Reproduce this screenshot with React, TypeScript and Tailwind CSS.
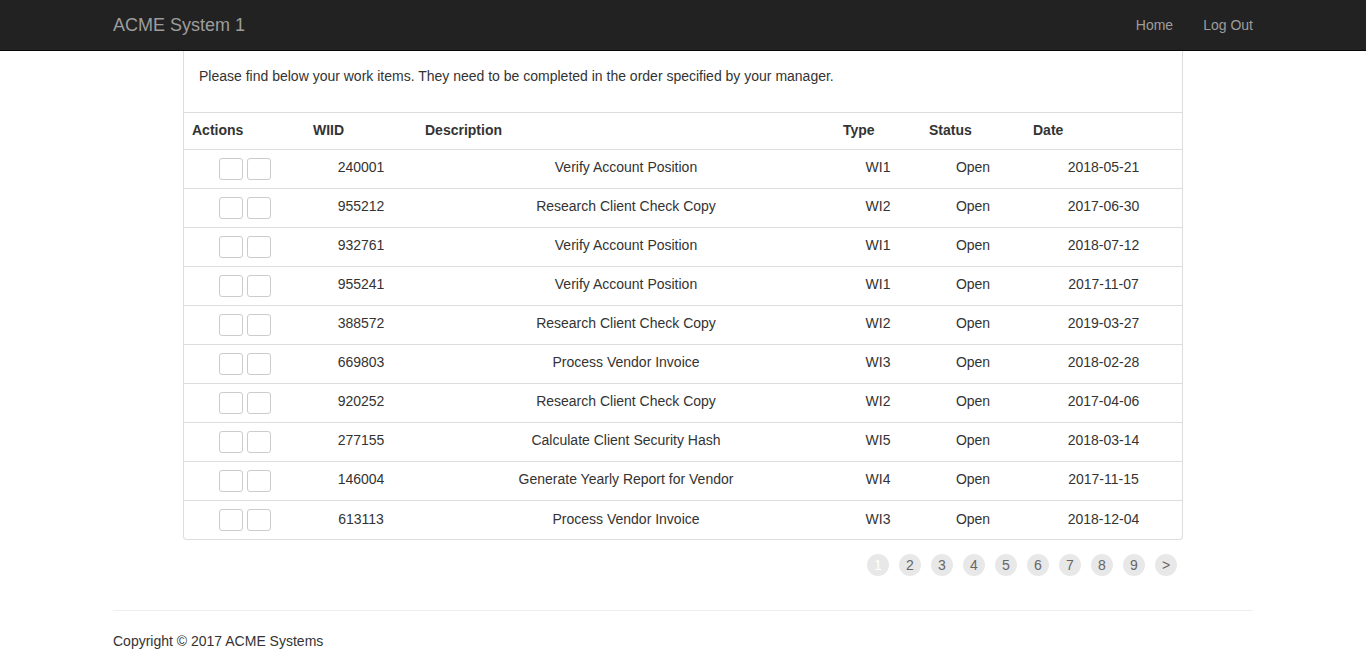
import React from 'react';

interface WorkItem {
    wiid: string;
    description: string;
    type: string;
    status: string;
    date: string;
}

const items: WorkItem[] = [
    { wiid: '240001', description: 'Verify Account Position', type: 'WI1', status: 'Open', date: '2018-05-21' },
    { wiid: '955212', description: 'Research Client Check Copy', type: 'WI2', status: 'Open', date: '2017-06-30' },
    { wiid: '932761', description: 'Verify Account Position', type: 'WI1', status: 'Open', date: '2018-07-12' },
    { wiid: '955241', description: 'Verify Account Position', type: 'WI1', status: 'Open', date: '2017-11-07' },
    { wiid: '388572', description: 'Research Client Check Copy', type: 'WI2', status: 'Open', date: '2019-03-27' },
    { wiid: '669803', description: 'Process Vendor Invoice', type: 'WI3', status: 'Open', date: '2018-02-28' },
    { wiid: '920252', description: 'Research Client Check Copy', type: 'WI2', status: 'Open', date: '2017-04-06' },
    { wiid: '277155', description: 'Calculate Client Security Hash', type: 'WI5', status: 'Open', date: '2018-03-14' },
    { wiid: '146004', description: 'Generate Yearly Report for Vendor', type: 'WI4', status: 'Open', date: '2017-11-15' },
    { wiid: '613113', description: 'Process Vendor Invoice', type: 'WI3', status: 'Open', date: '2018-12-04' },
];

const pages = ['1', '2', '3', '4', '5', '6', '7', '8', '9', '>'];

export default function App() {
    return (
        <div className="min-h-screen bg-white text-[14px] leading-5 text-[#333]" style={{ fontFamily: '"Liberation Sans", Arial, sans-serif' }}>
            {/* navbar */}
            <nav className="h-[51px] bg-[#222] border-b border-[#080808]">
                <div className="w-[1140px] mx-auto h-[50px] flex items-center justify-between">
                    <span className="text-[18px] text-[#9d9d9d]">ACME System 1</span>
                    <div className="flex items-center gap-[30px] text-[#9d9d9d]">
                        <a href="#">Home</a>
                        <a href="#">Log Out</a>
                    </div>
                </div>
            </nav>

            <div className="w-[1000px] mx-auto">
                <div className="border-x border-b border-[#ddd] rounded-b-[4px]">
                    <div className="px-[15px] pt-[15px] pb-[26px] border-b border-[#ddd]">
                        Please find below your work items. They need to be completed in the order specified by your manager.
                    </div>
                    <table className="w-full border-collapse table-fixed">
                        <colgroup>
                            <col className="w-[121px]" />
                            <col className="w-[112px]" />
                            <col className="w-[418px]" />
                            <col className="w-[86px]" />
                            <col className="w-[104px]" />
                            <col />
                        </colgroup>
                        <thead>
                            <tr className="text-left font-bold align-top">
                                <th className="px-2 pt-[7px] pb-[9px] h-[36px]">Actions</th>
                                <th className="px-2 pt-[7px] pb-[9px]">WIID</th>
                                <th className="px-2 pt-[7px] pb-[9px]">Description</th>
                                <th className="px-2 pt-[7px] pb-[9px]">Type</th>
                                <th className="px-2 pt-[7px] pb-[9px]">Status</th>
                                <th className="px-2 pt-[7px] pb-[9px]">Date</th>
                            </tr>
                        </thead>
                        <tbody>
                            {items.map((item, i) => {
                                const last = i === items.length - 1;
                                const cell = last ? 'px-2 pt-[8px]' : 'px-2 pt-[7px]';
                                return (
                                    <tr key={item.wiid} className="border-t border-[#ddd] text-center align-top">
                                        <td className={`p-2 ${last ? 'h-[38px]' : 'h-[39px]'}`}>
                                            <div className="flex justify-center gap-[4px]">
                                                <button className="w-[24px] h-[22px] border border-[#ccc] rounded-[3px] bg-white" />
                                                <button className="w-[24px] h-[22px] border border-[#ccc] rounded-[3px] bg-white" />
                                            </div>
                                        </td>
                                        <td className={cell}>{item.wiid}</td>
                                        <td className={cell}>{item.description}</td>
                                        <td className={cell}>{item.type}</td>
                                        <td className={cell}>{item.status}</td>
                                        <td className={cell}>{item.date}</td>
                                    </tr>
                                );
                            })}
                        </tbody>
                    </table>
                </div>

                <div className="flex justify-end gap-[10px] pr-[6px] mt-[14px]">
                    {pages.map((p, i) => (
                        <span
                            key={p}
                            className={`w-[22px] h-[22px] rounded-full bg-[#e8e8e8] flex items-center justify-center text-[14px] ${i === 0 ? 'text-white' : 'text-[#666]'}`}
                        >
                            {p}
                        </span>
                    ))}
                </div>
            </div>

            <footer className="w-[1140px] mx-auto mt-[34px] border-t border-[#eee] pt-[20px]">
                <p>Copyright © 2017 ACME Systems</p>
            </footer>
        </div>
    );
}
